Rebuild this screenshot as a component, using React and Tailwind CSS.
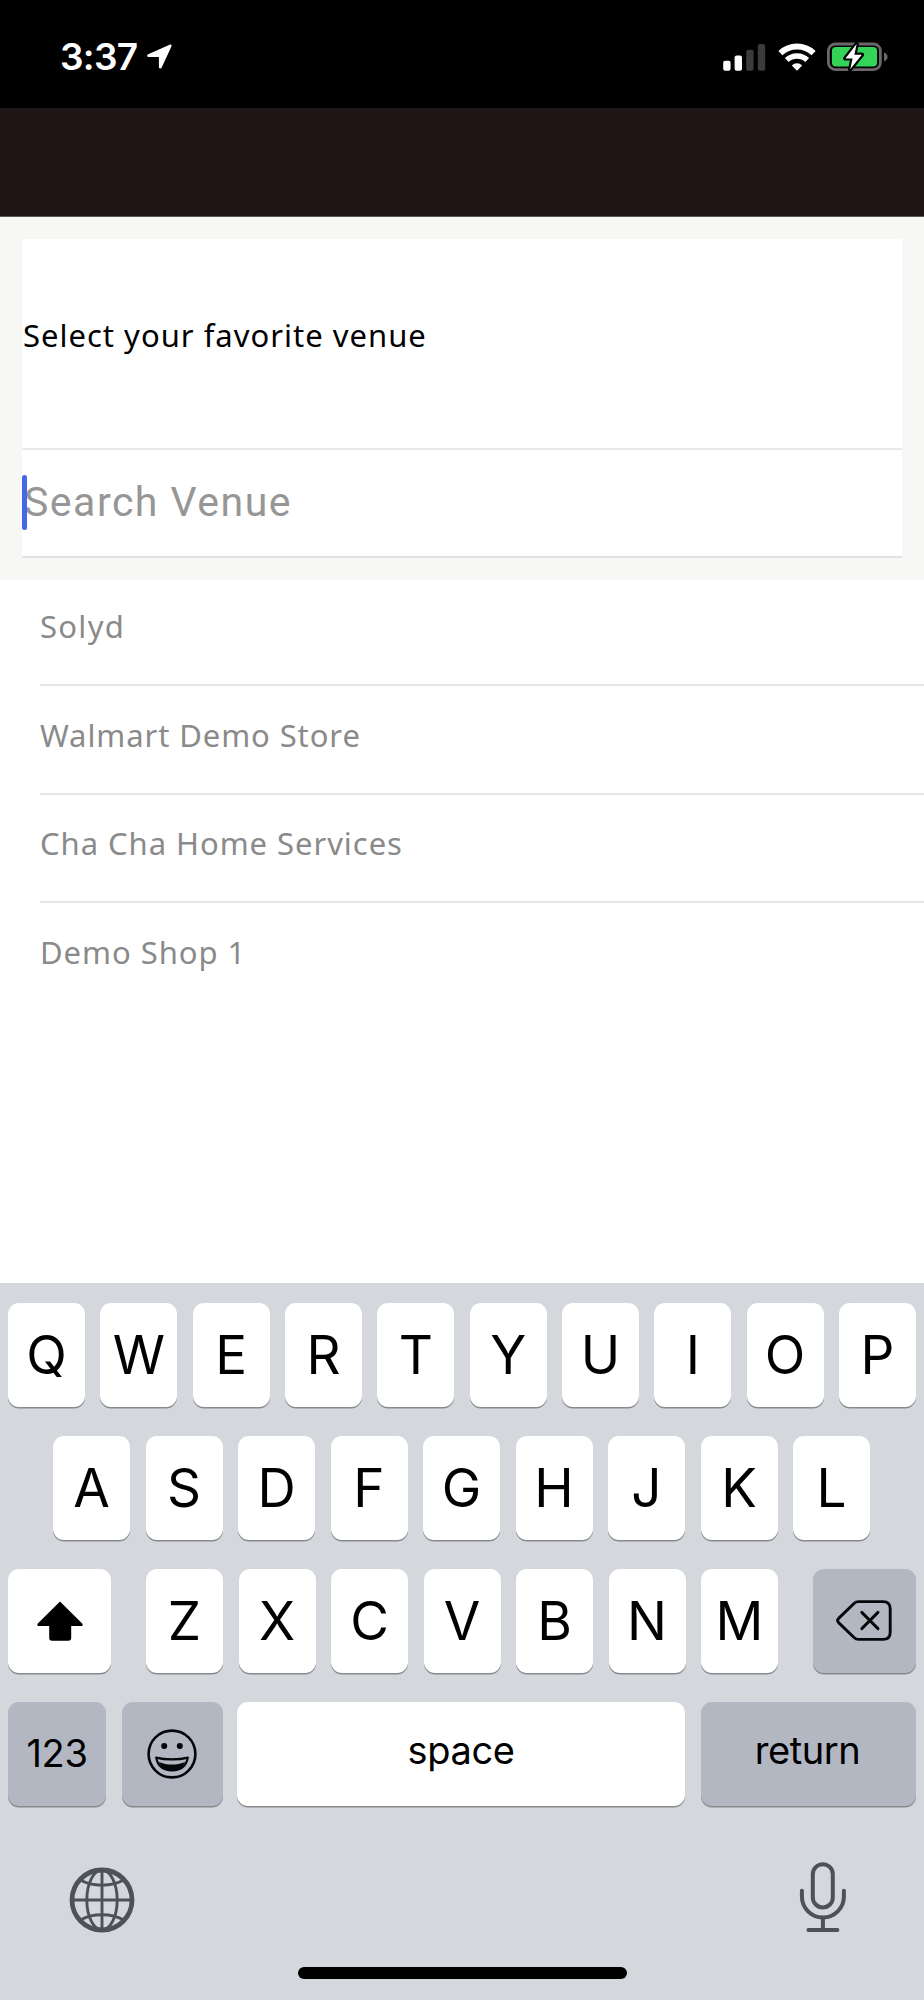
import React from 'react';
import { clsx } from 'clsx';

const VENUES = [
  { name: 'Solyd', tracking: 'tracking-[1.3px]' },
  { name: 'Walmart Demo Store', tracking: 'tracking-[0.9px]' },
  { name: 'Cha Cha Home Services', tracking: 'tracking-[0.95px]' },
  { name: 'Demo Shop 1', tracking: 'tracking-[0.95px]' },
];

function LocationArrow() {
  return (
    <svg className="h-[25px] w-[25px]" viewBox="0 0 25 25" fill="#fff">
      <path d="M1.2 10.3 L22.6.7 C24 .2 25 1.1 24.4 2.5 L14.7 23.6 C14 25 11.9 24.7 11.9 23 V13.6 C11.9 13.2 11.8 13.1 11.4 13.1 H1.9 C.1 13.1 -.4 11 1.2 10.3 Z" />
    </svg>
  );
}

function SignalIcon() {
  return (
    <svg className="h-7 w-[43px]" viewBox="0 0 43 28">
      <rect x="0.2" y="17.8" width="7.4" height="10" rx="2" fill="#fff" />
      <rect x="11.6" y="12.4" width="7.4" height="15.4" rx="2" fill="#fff" />
      <rect x="23.2" y="6.8" width="7.4" height="21" rx="2" fill="#3b3b3b" />
      <rect x="34.8" y="1" width="7.4" height="26.8" rx="2" fill="#3b3b3b" />
    </svg>
  );
}

function WifiIcon() {
  return (
    <svg className="h-7 w-[38px]" viewBox="0 0 38 28" fill="none" stroke="#fff" strokeWidth="6">
      <path d="M2.4 10.2 A24 24 0 0 1 35.6 10.2" />
      <path d="M8.8 17 A15 15 0 0 1 29.2 17" strokeWidth="5.6" />
      <path d="M19 27.7 L13.8 22.4 A7.6 7.6 0 0 1 24.2 22.4 Z" fill="#fff" stroke="none" />
    </svg>
  );
}

function BatteryIcon() {
  return (
    <svg className="h-[30px] w-[62px]" viewBox="0 0 62 30">
      <rect x="1.4" y="2" width="52" height="25.6" rx="7" fill="none" stroke="#6b6669" strokeWidth="2.8" />
      <path d="M57 10.2 C61.8 12.4 61.8 17.4 57 19.4 Z" fill="#6b6669" />
      <rect x="4.9" y="5" width="45.2" height="19.6" rx="4" fill="#33d457" />
      <path
        d="M29.6 2.1 L18.4 16.4 H25.6 L23.2 27.2 L34.8 12.8 H27.4 Z"
        fill="#fff"
        stroke="#000"
        strokeWidth="4.4"
        paintOrder="stroke"
        strokeLinejoin="round"
      />
    </svg>
  );
}

function ShiftIcon() {
  return (
    <svg className="h-10 w-[46px]" viewBox="0 0 46 40">
      <path
        d="M23 .4 L45.2 22.6 C46.2 24.2 45.6 25 44.2 25 H34.2 V37 Q34.2 39.8 31.4 39.8 H15 Q12.2 39.8 12.2 37 V25 H1.8 C.4 25 -.2 24.2 .8 22.6 Z"
        fill="#000"
      />
    </svg>
  );
}

function DeleteIcon() {
  return (
    <svg
      className="mr-0.5 h-[41px] w-14"
      viewBox="0 0 56 41"
      fill="none"
      stroke="#06070a"
      strokeWidth="2.9"
      strokeLinecap="round"
      strokeLinejoin="round"
    >
      <path d="M22.6 1.6 H47 Q54.2 1.6 54.2 8.8 V32.2 Q54.2 39.4 47 39.4 H22.6 Q20 39.4 18 37.5 L2.6 22.6 Q.6 20.5 2.6 18.4 L18 3.5 Q20 1.6 22.6 1.6 Z" />
      <path d="M25.8 12.4 L42 28.6 M42 12.4 L25.8 28.6" />
    </svg>
  );
}

function EmojiIcon() {
  return (
    <svg className="mr-px h-[50px] w-[50px]" viewBox="0 0 50 50">
      <circle cx="25" cy="25" r="23.4" fill="none" stroke="#06070a" strokeWidth="2.6" />
      <circle cx="17.2" cy="17" r="3" fill="#06070a" />
      <circle cx="32.8" cy="17" r="3" fill="#06070a" />
      <path
        d="M9.2 28.6 C18 31 32 31 40.8 28.6 C39.2 37.4 33 41.4 25 41.4 C17 41.4 10.8 37.4 9.2 28.6 Z"
        fill="#b3b7c2"
        stroke="#06070a"
        strokeWidth="2.2"
        strokeLinejoin="round"
      />
      <path d="M11.8 33 C20 36.4 30 36.4 38.2 33 C36 38.8 31.4 41.4 25 41.4 C18.6 41.4 14 38.8 11.8 33 Z" fill="#06070a" />
    </svg>
  );
}

function GlobeIcon() {
  return (
    <svg className="h-[66px] w-[66px]" viewBox="0 0 66 66" fill="none" stroke="#4d5258" strokeWidth="2.9">
      <circle cx="33" cy="33" r="30" strokeWidth="4.8" />
      <ellipse cx="33" cy="33" rx="15.2" ry="30" />
      <path d="M33 3 V63 M3 33 H63" />
      <path d="M11 12.8 C23 20 43 20 55 12.8 M11 53.2 C23 46 43 46 55 53.2" />
    </svg>
  );
}

function MicIcon() {
  return (
    <svg
      className="h-[70px] w-12"
      viewBox="0 0 48 70"
      fill="none"
      stroke="#4d5258"
      strokeWidth="4"
      strokeLinecap="round"
    >
      <rect x="13.8" y="2.2" width="20" height="43.2" rx="10" />
      <path d="M2.9 28.8 V34.6 A21 21 0 0 0 44.9 34.6 V28.8" />
      <path d="M23.9 56 V68 M9.4 68 H38.4" />
    </svg>
  );
}

function Key({ children, dark, className }) {
  return (
    <button
      className={clsx(
        'flex h-[104px] shrink-0 items-center justify-center rounded-[11px] shadow-[0_1.5px_0_#888a8e]',
        dark ? 'bg-[#b3b7c2]' : 'bg-white',
        className
      )}
    >
      {children}
    </button>
  );
}

function LetterKeys({ letters }) {
  return letters.split('').map((letter) => (
    <Key key={letter} className="w-[77px] pt-0.5 text-[53px] leading-none">
      {letter}
    </Key>
  ));
}

function Keyboard() {
  return (
    <div className="flex h-[717px] flex-col bg-[#d4d7dc] px-2 pt-[19.5px] font-['Inter',sans-serif] text-black">
      <div className="flex flex-col gap-[29px]">
        <div className="flex justify-between">
          <LetterKeys letters="QWERTYUIOP" />
        </div>
        <div className="flex justify-between pr-[46px] pl-[45px]">
          <LetterKeys letters="ASDFGHJKL" />
        </div>
        <div className="flex justify-between">
          <Key className="w-[103px]">
            <ShiftIcon />
          </Key>
          <div className="flex w-[632px] justify-between">
            <LetterKeys letters="ZXCVBNM" />
          </div>
          <Key dark className="w-[103px]">
            <DeleteIcon />
          </Key>
        </div>
        <div className="flex text-[38px] tracking-[-0.4px]">
          <Key dark className="w-[98px]">123</Key>
          <Key dark className="ml-4 w-[101px]">
            <EmojiIcon />
          </Key>
          <Key className="ml-3.5 w-[448px] pb-1.5">space</Key>
          <Key dark className="ml-4 w-[215px] pr-0.5 pb-1.5">return</Key>
        </div>
      </div>

      <div className="mt-[56.5px] flex justify-between pr-[69px] pl-[61px]">
        <div className="pt-[5px]">
          <GlobeIcon />
        </div>
        <MicIcon />
      </div>
      <div className="mt-[34px] ml-[290px] h-3 w-[329px] rounded-full bg-black" />
    </div>
  );
}

export default function App() {
  return (
    <div className="flex h-[2000px] w-[924px] flex-col overflow-hidden bg-white">
      {/* Status bar */}
      <div className="flex h-[108px] items-start justify-between bg-black pr-[35px] pl-[59px]">
        <div className="flex items-start pt-[38px]">
          <span className="w-[88px] pl-px font-['Inter',sans-serif] text-[37px] leading-[38px] font-semibold tracking-[-0.7px] text-white">
            3:37
          </span>
          <div className="pt-1.5">
            <LocationArrow />
          </div>
        </div>
        <div className="flex items-start pt-[43px]">
          <SignalIcon />
          <div className="ml-3">
            <WifiIcon />
          </div>
          <div className="-mt-px ml-[11px]">
            <BatteryIcon />
          </div>
        </div>
      </div>

      {/* Header */}
      <div className="h-[109px] border-b border-[#5a5253] bg-[#1f1516]" />

      {/* Search */}
      <div className="h-[363px] bg-[#f7f7f5] px-[22px] pt-[22px]">
        <div className="flex h-[211px] items-center border-b-2 border-[#e8e8e8] bg-white pb-[17px] pl-px font-['Noto_Sans',sans-serif] text-[31px] tracking-[1px] text-black">
          Select your favorite venue
        </div>
        <div className="relative flex h-[108px] items-center border-b-2 border-[#e2e2e2] bg-white font-['Roboto',sans-serif] text-[41px] tracking-[1.5px] text-[#969696]">
          <span className="pl-0.5">Search Venue</span>
          <span className="absolute top-[25px] left-0 h-[55px] w-[5px] rounded-full bg-[#4169e8]" />
        </div>
      </div>

      {/* Venue list */}
      <div className="h-[703px] pl-10 font-['Noto_Sans',sans-serif] text-[31px] text-[#8a8a8a]">
        {VENUES.map((venue) => (
          <div
            key={venue.name}
            className={clsx(
              'flex h-[108.5px] items-center border-b-2 border-[#e6e6e6] pb-[9px] first:h-[106px] first:pb-3 last:border-transparent',
              venue.tracking
            )}
          >
            {venue.name}
          </div>
        ))}
      </div>

      <Keyboard />
    </div>
  );
}
